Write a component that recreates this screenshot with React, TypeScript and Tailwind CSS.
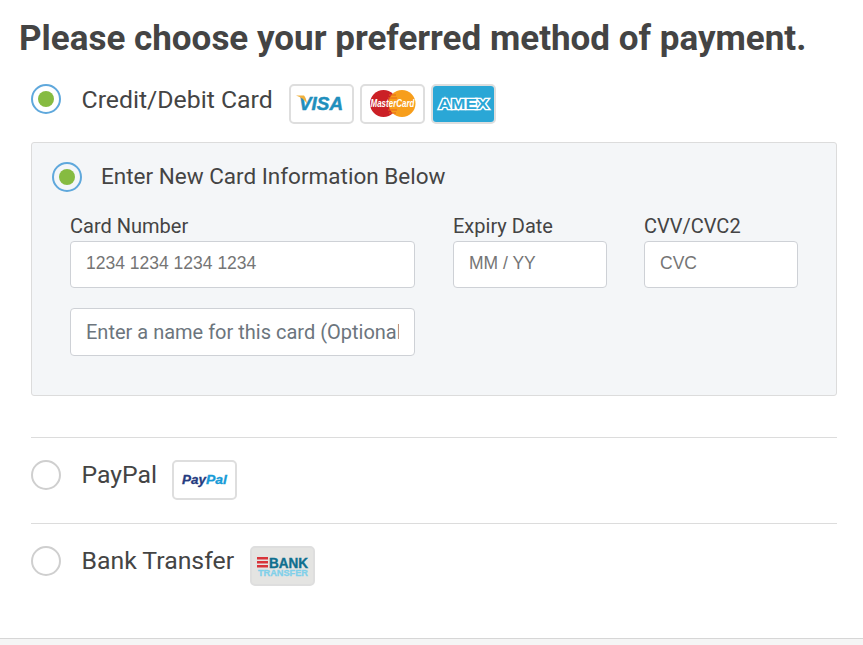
import React from 'react';

const Radio = ({ checked = false }: { checked?: boolean }) => (
  <span
    className={`w-[30px] h-[30px] shrink-0 rounded-full border-2 flex items-center justify-center ${
      checked ? 'border-[#5fa8dc]' : 'border-[#cfcfcf]'
    }`}
  >
    {checked && <span className="w-[16px] h-[16px] rounded-full bg-[#86bb41]" />}
  </span>
);

const Badge = ({ children, className = 'bg-white' }: { children: React.ReactNode; className?: string }) => (
  <span className={`block w-[65px] h-[40px] shrink-0 rounded-[5px] border-2 border-[#dedede] overflow-hidden ${className}`}>
    {children}
  </span>
);

const VisaLogo = () => (
  <svg viewBox="0 0 61 36" className="block w-full h-full">
    <text x="8" y="24" fontFamily="Liberation Sans, sans-serif" fontWeight="700" fontStyle="italic" fontSize="19" fill="#1f8fbd" stroke="#1f8fbd" strokeWidth="0.5" textLength="44" lengthAdjust="spacingAndGlyphs">
      VISA
    </text>
    <path d="M5 9.5 L13 9.5 C14.5 11 15.5 14 16 18 C14 14 10 11 5 9.5Z" fill="#f0b03c" />
  </svg>
);

const MasterLogo = () => (
  <svg viewBox="0 0 61 36" className="block w-full h-full">
    <circle cx="21.5" cy="17.5" r="13.5" fill="#cb2026" />
    <circle cx="40" cy="17.5" r="13.5" fill="#f79e1b" />
    <path d="M27 9h7M26 12h9M26 24h9M27 27h7" stroke="#e8641d" strokeWidth="1.2" />
    <text x="30.5" y="21" textAnchor="middle" fontFamily="Liberation Sans, sans-serif" fontWeight="700" fontStyle="italic" fontSize="10.5" fill="#fff" textLength="44" lengthAdjust="spacingAndGlyphs">
      MasterCard
    </text>
  </svg>
);

const AmexLogo = () => (
  <svg viewBox="0 0 61 36" className="block w-full h-full">
    <rect width="61" height="36" fill="#2aa7d6" />
    <text x="30.5" y="23" textAnchor="middle" fontFamily="Liberation Sans, sans-serif" fontWeight="700" fontSize="14.5" fill="#2aa7d6" stroke="#fff" strokeWidth="2.6" paintOrder="stroke" textLength="50" lengthAdjust="spacingAndGlyphs">
      AMEX
    </text>
  </svg>
);

const PayPalLogo = () => (
  <svg viewBox="0 0 61 36" className="block w-full h-full">
    <text x="8" y="22" fontFamily="Liberation Sans, sans-serif" fontWeight="700" fontStyle="italic" fontSize="13" fill="#253b80" stroke="#253b80" strokeWidth="0.3" textLength="24" lengthAdjust="spacingAndGlyphs">
      Pay
    </text>
    <text x="32" y="22" fontFamily="Liberation Sans, sans-serif" fontWeight="700" fontStyle="italic" fontSize="13" fill="#179bd7" stroke="#179bd7" strokeWidth="0.3" textLength="21" lengthAdjust="spacingAndGlyphs">
      Pal
    </text>
  </svg>
);

const BankLogo = () => (
  <svg viewBox="0 0 61 36" className="block w-full h-full">
    <path d="M5 9h11v2.4H5zM5 13h11v2.4H5zM5 17h11v2.4H5z" fill="#d8343a" />
    <text x="17" y="19.5" fontFamily="Liberation Sans, sans-serif" fontWeight="700" fontSize="14" fill="#0f6f8f" stroke="#0f6f8f" strokeWidth="0.4" textLength="39" lengthAdjust="spacingAndGlyphs">
      BANK
    </text>
    <text x="6" y="27.5" fontFamily="Liberation Sans, sans-serif" fontWeight="700" fontSize="9.5" fill="#7fd0ea" stroke="#7fd0ea" strokeWidth="0.3" textLength="50" lengthAdjust="spacingAndGlyphs">
      TRANSFER
    </text>
  </svg>
);

const Field = ({ label, placeholder, className }: { label: string; placeholder: string; className: string }) => (
  <div className={className}>
    <label className="block text-[20px] leading-[24px] text-[#444] mb-[3px]">{label}</label>
    <input
      type="text"
      readOnly
      placeholder={placeholder}
      className="w-full h-[47px] px-[15px] bg-white border border-[#ced1d6] rounded-[4px] text-[17.5px] pb-[3px] outline-none placeholder:text-[#757575] font-['Liberation_Sans',sans-serif]"
    />
  </div>
);

export default function App() {
  return (
    <div className="w-[863px] h-[645px] overflow-hidden bg-white font-['Roboto',sans-serif] text-[#444] flex flex-col">
      <h1 className="pl-[19px] pt-[16px] text-[35px] leading-[46px] font-bold text-[#444]">
        Please choose your preferred method of payment.
      </h1>

      <div className="ml-[31px] w-[806px] flex-1">
        <div className="flex items-start mt-[22px] h-[40px]">
          <Radio checked />
          <span className="ml-[20.5px] text-[24.8px] leading-[30px] mt-[1px]">Credit/Debit Card</span>
          <div className="ml-[16.5px] flex gap-[6px]">
            <Badge><VisaLogo /></Badge>
            <Badge><MasterLogo /></Badge>
            <Badge><AmexLogo /></Badge>
          </div>
        </div>

        <div className="mt-[18px] h-[254px] bg-[#f4f6f8] border border-[#dcdcdc] rounded-[3px] pt-[19px] pl-[20px]">
          <div className="flex items-center">
            <Radio checked />
            <span className="ml-[19px] text-[22.5px] leading-[28px] -mt-[2px]">Enter New Card Information Below</span>
          </div>

          <div className="ml-[18px] mt-[22px] flex">
            <Field label="Card Number" placeholder="1234 1234 1234 1234" className="w-[345px]" />
            <Field label="Expiry Date" placeholder="MM / YY" className="w-[154px] ml-[38px]" />
            <Field label="CVV/CVC2" placeholder="CVC" className="w-[154px] ml-[37px]" />
          </div>

          <input
            type="text"
            readOnly
            placeholder="Enter a name for this card (Optional)"
            className="block ml-[18px] mt-[20px] w-[345px] h-[48px] px-[15px] bg-white border border-[#ced1d6] rounded-[4px] text-[20px] outline-none placeholder:text-[#6c757d]"
          />
        </div>

        <div className="mt-[41px] border-t border-[#dcdcdc] h-[86px] pt-[22px] flex items-start">
          <Radio />
          <span className="ml-[20.5px] text-[24.8px] leading-[30px]">PayPal</span>
          <div className="ml-[14.5px]">
            <Badge><PayPalLogo /></Badge>
          </div>
        </div>

        <div className="border-t border-[#dcdcdc] pt-[22px] flex items-start">
          <Radio />
          <span className="ml-[20.5px] text-[24.8px] leading-[30px]">Bank Transfer</span>
          <div className="ml-[15.5px]">
            <Badge className="bg-[#e4e4e2]"><BankLogo /></Badge>
          </div>
        </div>
      </div>

      <div className="h-[7px] bg-[#f5f5f5] border-t border-[#d6d6d6]" />
    </div>
  );
}
